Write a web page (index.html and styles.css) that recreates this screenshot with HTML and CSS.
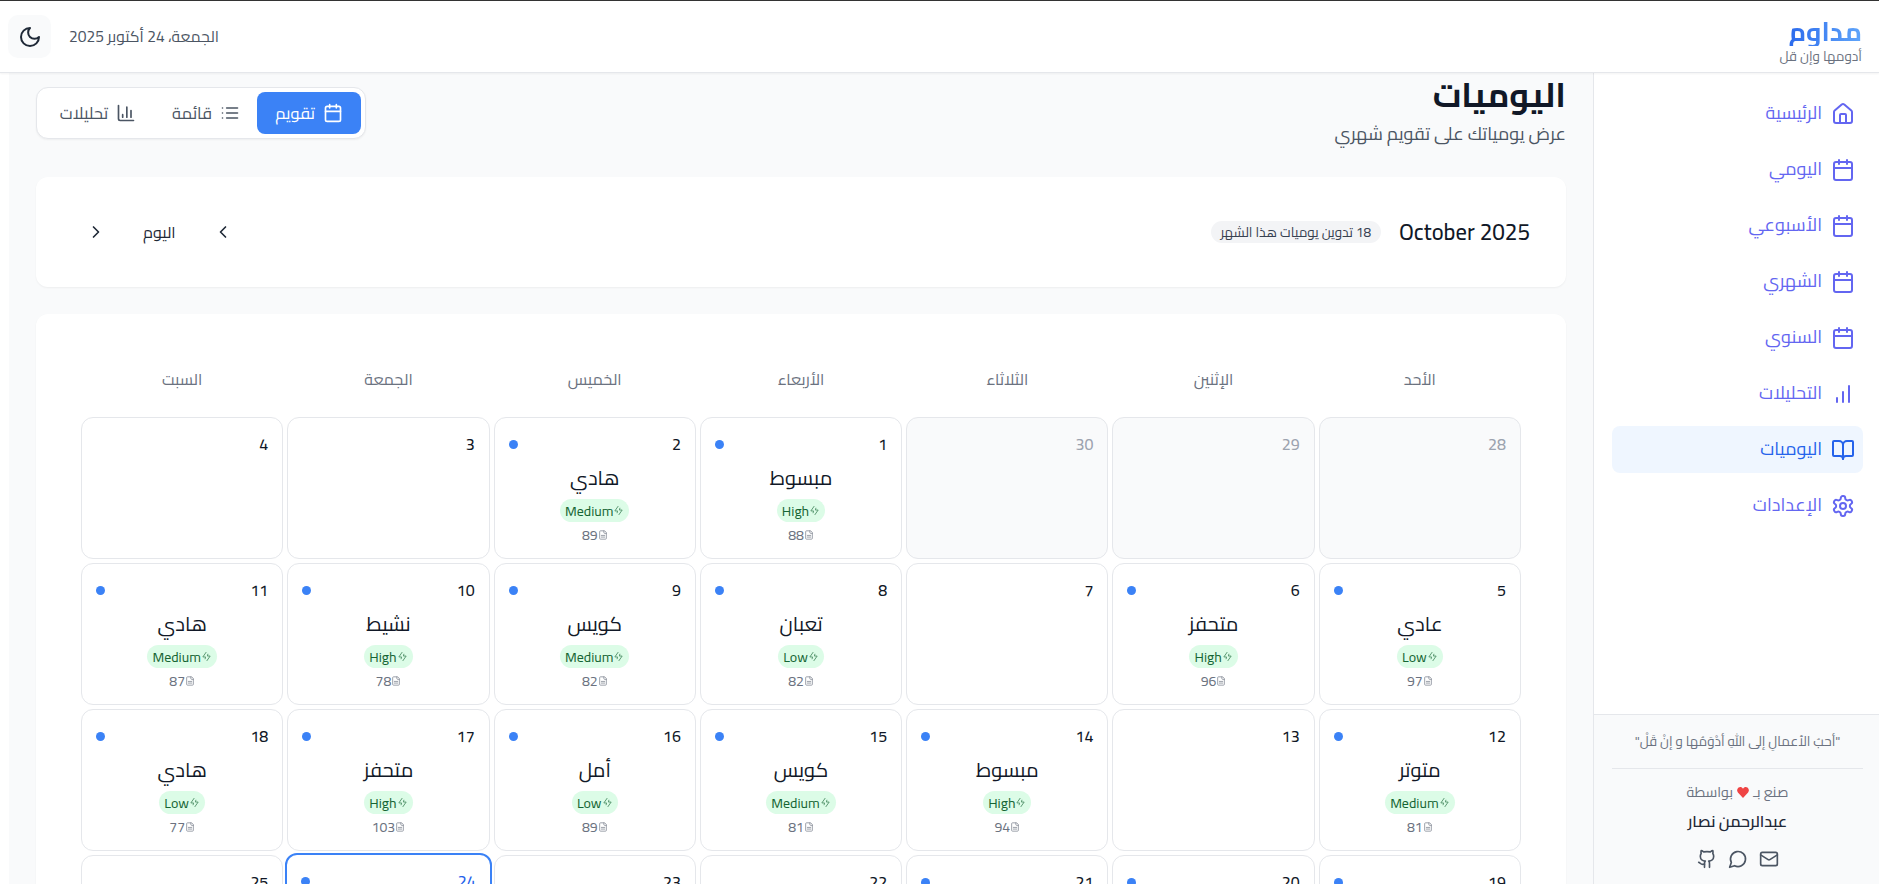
FILE: index.html
```html
<!DOCTYPE html>
<html lang="ar" dir="rtl">
<head>
<meta charset="utf-8">
<title>مداوم</title>
<link rel="stylesheet" href="styles.css">
</head>
<body>
<svg class="sprite" width="0" height="0" aria-hidden="true">
  <symbol id="i-cal" viewBox="0 0 24 24"><path d="M8 2v4M16 2v4"/><rect x="3" y="4" width="18" height="18" rx="2"/><path d="M3 10h18"/></symbol>
  <symbol id="i-home" viewBox="0 0 24 24"><path d="M15 21v-8a1 1 0 0 0-1-1h-4a1 1 0 0 0-1 1v8"/><path d="M3 10a2 2 0 0 1 .709-1.528l7-5.999a2 2 0 0 1 2.582 0l7 5.999A2 2 0 0 1 21 10v9a2 2 0 0 1-2 2H5a2 2 0 0 1-2-2z"/></symbol>
  <symbol id="i-bars" viewBox="0 0 24 24"><path d="M12 20V10M18 20V4M6 20v-4"/></symbol>
  <symbol id="i-book" viewBox="0 0 24 24"><path d="M12 7v14"/><path d="M3 18a1 1 0 0 1-1-1V4a1 1 0 0 1 1-1h5a4 4 0 0 1 4 4 4 4 0 0 1 4-4h5a1 1 0 0 1 1 1v13a1 1 0 0 1-1 1h-6a3 3 0 0 0-3 3 3 3 0 0 0-3-3z"/></symbol>
  <symbol id="i-gear" viewBox="0 0 24 24"><path d="M12.22 2h-.44a2 2 0 0 0-2 2v.18a2 2 0 0 1-1 1.73l-.43.25a2 2 0 0 1-2 0l-.15-.08a2 2 0 0 0-2.73.73l-.22.38a2 2 0 0 0 .73 2.73l.15.1a2 2 0 0 1 1 1.72v.51a2 2 0 0 1-1 1.74l-.15.09a2 2 0 0 0-.73 2.73l.22.38a2 2 0 0 0 2.73.73l.15-.08a2 2 0 0 1 2 0l.43.25a2 2 0 0 1 1 1.73V20a2 2 0 0 0 2 2h.44a2 2 0 0 0 2-2v-.18a2 2 0 0 1 1-1.73l.43-.25a2 2 0 0 1 2 0l.15.08a2 2 0 0 0 2.73-.73l.22-.39a2 2 0 0 0-.73-2.73l-.15-.08a2 2 0 0 1-1-1.74v-.5a2 2 0 0 1 1-1.74l.15-.09a2 2 0 0 0 .73-2.73l-.22-.38a2 2 0 0 0-2.73-.73l-.15.08a2 2 0 0 1-2 0l-.43-.25a2 2 0 0 1-1-1.73V4a2 2 0 0 0-2-2z"/><circle cx="12" cy="12" r="3"/></symbol>
  <symbol id="i-moon" viewBox="0 0 24 24"><path d="M12 3a6 6 0 0 0 9 9 9 9 0 1 1-9-9Z"/></symbol>
  <symbol id="i-list" viewBox="0 0 24 24"><path d="M3 12h.01M3 18h.01M3 6h.01M8 12h13M8 18h13M8 6h13"/></symbol>
  <symbol id="i-chart" viewBox="0 0 24 24"><path d="M3 3v16a2 2 0 0 0 2 2h16"/><path d="M18 17V9M13 17V5M8 17v-3"/></symbol>
  <symbol id="i-left" viewBox="0 0 24 24"><path d="m15 18-6-6 6-6"/></symbol>
  <symbol id="i-right" viewBox="0 0 24 24"><path d="m9 18 6-6-6-6"/></symbol>
  <symbol id="i-zap" viewBox="0 0 24 24"><path d="M11 3 4 13h6l-1 4"/><path d="M13 21l7-10h-6l1-4"/></symbol>
  <symbol id="i-file" viewBox="0 0 24 24"><path d="M15 2H6a2 2 0 0 0-2 2v16a2 2 0 0 0 2 2h12a2 2 0 0 0 2-2V7Z"/><path d="M14 2v4a2 2 0 0 0 2 2h4M8 13h8M8 17h8"/></symbol>
  <symbol id="i-mail" viewBox="0 0 24 24"><rect x="2" y="4" width="20" height="16" rx="2"/><path d="m22 7-8.97 5.7a1.94 1.94 0 0 1-2.06 0L2 7"/></symbol>
  <symbol id="i-chat" viewBox="0 0 24 24"><path d="M7.9 20A9 9 0 1 0 4 16.1L2 22Z"/></symbol>
  <symbol id="i-git" viewBox="0 0 24 24"><path d="M15 22v-4a4.8 4.8 0 0 0-1-3.5c3 0 6-2 6-5.5.08-1.25-.27-2.48-1-3.5.28-1.15.28-2.35 0-3.5 0 0-1 0-3 1.5-2.64-.5-5.36-.5-8 0C6 2 5 2 5 2c-.3 1.15-.3 2.35 0 3.5A5.403 5.403 0 0 0 4 9c0 3.5 3 5.5 6 5.5-.39.49-.68 1.05-.85 1.65-.17.6-.22 1.23-.15 1.85v4"/><path d="M9 18c-4.51 2-5-2-7-2"/></symbol>
  <symbol id="i-heart" viewBox="0 0 24 24"><path d="M12 22 2.6 12.2A6.2 6.2 0 0 1 7 2c2 0 3.700 1 5 3 1.300-2 3-3 5-3a6.200 6.200 0 0 1 4.400 10.200Z"/></symbol>
</svg>

<header class="topbar">
  <div class="brand">
    <div class="brand-name">مداوم</div>
    <div class="brand-tag">أدومها وإن قل</div>
  </div>
  <div class="top-tools">
    <span class="today-date">الجمعة، 24 أكتوبر 2025</span>
    <button class="theme-btn"><svg class="ico i24"><use href="#i-moon"/></svg></button>
  </div>
</header>

<div class="shell">
  <aside class="sidebar">
    <nav class="nav">
      <a class="nav-item"><svg class="ico i24"><use href="#i-home"/></svg><span>الرئيسية</span></a>
      <a class="nav-item"><svg class="ico i24"><use href="#i-cal"/></svg><span>اليومي</span></a>
      <a class="nav-item"><svg class="ico i24"><use href="#i-cal"/></svg><span>الأسبوعي</span></a>
      <a class="nav-item"><svg class="ico i24"><use href="#i-cal"/></svg><span>الشهري</span></a>
      <a class="nav-item"><svg class="ico i24"><use href="#i-cal"/></svg><span>السنوي</span></a>
      <a class="nav-item"><svg class="ico i24"><use href="#i-bars"/></svg><span>التحليلات</span></a>
      <a class="nav-item active"><svg class="ico i24"><use href="#i-book"/></svg><span>اليوميات</span></a>
      <a class="nav-item"><svg class="ico i24"><use href="#i-gear"/></svg><span>الإعدادات</span></a>
    </nav>
    <div class="side-foot">
      <p class="quote">"أحبُ الأعمالِ إلى اللهِ أدْوَمُها و إنْ قَلْ"</p>
      <div class="foot-rule"></div>
      <p class="made">صنع بـ <svg class="heart"><use href="#i-heart"/></svg> بواسطة</p>
      <p class="author">عبدالرحمن نصار</p>
      <div class="socials">
        <svg class="ico i20"><use href="#i-mail"/></svg>
        <svg class="ico i20"><use href="#i-chat"/></svg>
        <svg class="ico i20"><use href="#i-git"/></svg>
      </div>
    </div>
  </aside>

  <main class="main">
    <section class="page-head">
      <div class="titles">
        <h1>اليوميات</h1>
        <p>عرض يومياتك على تقويم شهري</p>
      </div>
      <div class="views">
        <button class="view view-cal on"><svg class="ico i20"><use href="#i-cal"/></svg>تقويم</button>
        <button class="view view-list"><svg class="ico i20"><use href="#i-list"/></svg>قائمة</button>
        <button class="view view-stats"><svg class="ico i20"><use href="#i-chart"/></svg>تحليلات</button>
      </div>
    </section>

    <section class="card month-bar">
      <div class="month-info">
        <h2>October 2025</h2>
        <span class="month-count">18 تدوين يوميات هذا الشهر</span>
      </div>
      <div class="month-nav">
        <svg class="ico i20"><use href="#i-left"/></svg>
        <span>اليوم</span>
        <svg class="ico i20"><use href="#i-right"/></svg>
      </div>
    </section>

    <section class="card cal">
      <div class="week">
        <span>الأحد</span><span>الإثنين</span><span>الثلاثاء</span><span>الأربعاء</span><span>الخميس</span><span>الجمعة</span><span>السبت</span>
      </div>
      <div class="grid" id="grid">
        <div class="cell muted"><div class="cell-top"><b>28</b></div></div>
        <div class="cell muted"><div class="cell-top"><b>29</b></div></div>
        <div class="cell muted"><div class="cell-top"><b>30</b></div></div>
        <div class="cell"><div class="cell-top"><b>1</b><i></i></div><div class="mood">مبسوط</div><span class="pill">High<svg class="ico"><use href="#i-zap"/></svg></span><div class="count">88<svg class="ico"><use href="#i-file"/></svg></div></div>
        <div class="cell"><div class="cell-top"><b>2</b><i></i></div><div class="mood">هادي</div><span class="pill">Medium<svg class="ico"><use href="#i-zap"/></svg></span><div class="count">89<svg class="ico"><use href="#i-file"/></svg></div></div>
        <div class="cell"><div class="cell-top"><b>3</b></div></div>
        <div class="cell"><div class="cell-top"><b>4</b></div></div>

        <div class="cell"><div class="cell-top"><b>5</b><i></i></div><div class="mood">عادي</div><span class="pill">Low<svg class="ico"><use href="#i-zap"/></svg></span><div class="count">97<svg class="ico"><use href="#i-file"/></svg></div></div>
        <div class="cell"><div class="cell-top"><b>6</b><i></i></div><div class="mood">متحفز</div><span class="pill">High<svg class="ico"><use href="#i-zap"/></svg></span><div class="count">96<svg class="ico"><use href="#i-file"/></svg></div></div>
        <div class="cell"><div class="cell-top"><b>7</b></div></div>
        <div class="cell"><div class="cell-top"><b>8</b><i></i></div><div class="mood">تعبان</div><span class="pill">Low<svg class="ico"><use href="#i-zap"/></svg></span><div class="count">82<svg class="ico"><use href="#i-file"/></svg></div></div>
        <div class="cell"><div class="cell-top"><b>9</b><i></i></div><div class="mood">كويس</div><span class="pill">Medium<svg class="ico"><use href="#i-zap"/></svg></span><div class="count">82<svg class="ico"><use href="#i-file"/></svg></div></div>
        <div class="cell"><div class="cell-top"><b>10</b><i></i></div><div class="mood">نشيط</div><span class="pill">High<svg class="ico"><use href="#i-zap"/></svg></span><div class="count">78<svg class="ico"><use href="#i-file"/></svg></div></div>
        <div class="cell"><div class="cell-top"><b>11</b><i></i></div><div class="mood">هادي</div><span class="pill">Medium<svg class="ico"><use href="#i-zap"/></svg></span><div class="count">87<svg class="ico"><use href="#i-file"/></svg></div></div>

        <div class="cell"><div class="cell-top"><b>12</b><i></i></div><div class="mood">متوتر</div><span class="pill">Medium<svg class="ico"><use href="#i-zap"/></svg></span><div class="count">81<svg class="ico"><use href="#i-file"/></svg></div></div>
        <div class="cell"><div class="cell-top"><b>13</b></div></div>
        <div class="cell"><div class="cell-top"><b>14</b><i></i></div><div class="mood">مبسوط</div><span class="pill">High<svg class="ico"><use href="#i-zap"/></svg></span><div class="count">94<svg class="ico"><use href="#i-file"/></svg></div></div>
        <div class="cell"><div class="cell-top"><b>15</b><i></i></div><div class="mood">كويس</div><span class="pill">Medium<svg class="ico"><use href="#i-zap"/></svg></span><div class="count">81<svg class="ico"><use href="#i-file"/></svg></div></div>
        <div class="cell"><div class="cell-top"><b>16</b><i></i></div><div class="mood">أمل</div><span class="pill">Low<svg class="ico"><use href="#i-zap"/></svg></span><div class="count">89<svg class="ico"><use href="#i-file"/></svg></div></div>
        <div class="cell"><div class="cell-top"><b>17</b><i></i></div><div class="mood">متحفز</div><span class="pill">High<svg class="ico"><use href="#i-zap"/></svg></span><div class="count">103<svg class="ico"><use href="#i-file"/></svg></div></div>
        <div class="cell"><div class="cell-top"><b>18</b><i></i></div><div class="mood">هادي</div><span class="pill">Low<svg class="ico"><use href="#i-zap"/></svg></span><div class="count">77<svg class="ico"><use href="#i-file"/></svg></div></div>

        <div class="cell"><div class="cell-top"><b>19</b><i></i></div></div>
        <div class="cell"><div class="cell-top"><b>20</b><i></i></div></div>
        <div class="cell"><div class="cell-top"><b>21</b><i></i></div></div>
        <div class="cell"><div class="cell-top"><b>22</b></div></div>
        <div class="cell"><div class="cell-top"><b>23</b></div></div>
        <div class="cell today"><div class="cell-top"><b>24</b><i></i></div></div>
        <div class="cell"><div class="cell-top"><b>25</b></div></div>
      </div>
    </section>
  </main>
  <div class="gutter"></div>
</div>
</body>
</html>
```
FILE: styles.css
```css
* { box-sizing: border-box; }
html, body { height: 100%; }
body {
  margin: 0;
  overflow: hidden;
  background: #fff;
  color: #111827;
  font-family: Cairo, "Noto Sans Arabic", "Noto Kufi Arabic", "Open Sans", "DejaVu Sans", sans-serif;
  font-size: 16px;
  display: flex;
  flex-direction: column;
  border-top: 1px solid #333;
}
.sprite { position: absolute; }
.ico { width: 20px; height: 20px; fill: none; stroke: currentColor; stroke-width: 2; stroke-linecap: round; stroke-linejoin: round; flex: none; }
.i24 { width: 24px; height: 24px; }
.i20 { width: 20px; height: 20px; }

.topbar {
  height: 72px; flex: none;
  display: flex; align-items: center; justify-content: space-between;
  padding: 0 17px 0 8px;
  border-bottom: 1px solid #e5e7eb;
  box-shadow: 0 1px 2px rgba(0,0,0,.05);
  background: #fff;
  position: relative;
}
.brand { text-align: right; padding-top: 8px; }
.brand-name { font-size: 26.5px; font-weight: 700; line-height: 30px; color: #3b82f6; background: linear-gradient(to left, #60a5fa, #2563eb); -webkit-background-clip: text; background-clip: text; -webkit-text-fill-color: transparent; }
.brand-tag { font-size: 13.5px; line-height: 19px; margin-top: 1px; color: #6b7280; }
.top-tools { display: flex; align-items: center; gap: 18px; }
.today-date { font-size: 15.6px; color: #4b5563; }
.theme-btn { width: 43px; height: 43px; border: 0; border-radius: 10px; background: #f9fafb; color: #1f2937; display: flex; align-items: center; justify-content: center; padding: 0; }

.shell { flex: 1; display: flex; min-height: 0; }
.sidebar { width: 286px; flex: none; border-left: 1px solid #e5e7eb; display: flex; flex-direction: column; background: #fff; }
.nav { flex: 1; padding: 17px 16px 0 18px; display: flex; flex-direction: column; gap: 9px; }
.nav-item { height: 47px; display: flex; align-items: center; gap: 9px; padding: 0 8px; border-radius: 8px; color: #6366f1; font-size: 18px; }
.nav-item span { margin-top: -2px; }
.nav-item.active { background: #eff6ff; color: #2563eb; }

.side-foot { height: 170px; flex: none; border-top: 1px solid #e5e7eb; background: #f9fafb; padding: 16px 16px 0 18px; text-align: center; }
.side-foot p { margin: 0; }
.quote { font-size: 13.4px; line-height: 22px; color: #6b7280; }
.foot-rule { height: 1px; background: #e5e7eb; margin: 15px 0 12px; }
.made { font-size: 14.2px; line-height: 22px; color: #6b7280; }
.heart { width: 14px; height: 13px; fill: #ef4444; vertical-align: -2px; }
.author { font-size: 16px; font-weight: 600; line-height: 22px; margin-top: 7px !important; color: #1f2937; }
.socials { display: flex; justify-content: center; gap: 11px; margin-top: 17px; color: #4b5563; }

.main { flex: 1; min-width: 0; overflow: hidden; background: #f9fafb; padding: 0 27px 0 27px; }
.gutter { width: 9px; flex: none; background: #fff; }

.page-head { display: flex; justify-content: space-between; align-items: flex-start; height: 104px; padding-top: 2px; }
.titles h1 { margin: 0; font-size: 34px; line-height: 40px; font-weight: 700; color: #111827; }
.titles p { margin: 6px 0 0; font-size: 18px; line-height: 26px; color: #4b5563; }
.views { display: flex; gap: 4px; padding: 4px; margin-top: 12px; background: #fff; border: 1px solid #e5e7eb; border-radius: 12px; box-shadow: 0 1px 2px rgba(0,0,0,.05); }
.view { height: 42px; display: flex; align-items: center; justify-content: center; gap: 8px; border: 0; border-radius: 8px; background: none; font: inherit; font-size: 16.5px; color: #4b5563; padding: 0; }
.view-cal { width: 104px; }
.view-list { width: 94px; }
.view-stats { width: 114px; }
.view.on { background: #3b82f6; color: #fff; }

.card { background: #fff; border-radius: 12px; box-shadow: 0 1px 2px rgba(0,0,0,.05); }
.month-bar { height: 110px; display: flex; align-items: center; justify-content: space-between; padding: 0 36px; margin-bottom: 27px; }
.month-info { display: flex; align-items: center; gap: 18px; }
.month-info h2 { margin: 0; font-size: 22.5px; font-weight: 500; direction: ltr; }
.month-count { font-size: 13.5px; line-height: 22px; padding: 0 10px; border-radius: 11px; background: #f3f4f6; color: #374151; }
.month-nav { display: flex; align-items: center; gap: 37px; font-size: 16px; color: #1f2937; margin-left: 14px; }

.cal { padding: 45px 45px 0; min-height: 700px; }
.week { display: grid; grid-template-columns: repeat(7, 1fr); gap: 4px; height: 58px; text-align: center; font-size: 16px; line-height: 40px; color: #6b7280; }
.grid { display: grid; grid-template-columns: repeat(7, 1fr); grid-auto-rows: 142px; gap: 4px; }
.cell { border: 1px solid #e5e7eb; border-radius: 12px; padding: 14px; display: flex; flex-direction: column; align-items: center; background: #fff; }
.cell.muted { background: #f9fafb; }
.cell.muted b { color: #9ca3af; }
.cell.today { border: 2px solid #3b82f6; margin: -2px; }
.cell.today b { color: #2563eb; }
.cell-top { width: 100%; height: 24px; display: flex; align-items: center; justify-content: space-between; }
.cell-top b { font-weight: 500; font-size: 16px; }
.cell-top i { width: 9px; height: 9px; border-radius: 50%; background: #3b82f6; }
.mood { font-size: 20px; line-height: 28px; margin-top: 8px; color: #111827; }
.pill { display: inline-flex; align-items: center; direction: ltr; height: 23px; margin-top: 7px; padding: 0 5px; border-radius: 12px; background: #dcfce7; color: #166534; font-size: 14px; }
.pill .ico { width: 11px; height: 11px; stroke-width: 2; opacity: .7; }
.count { display: flex; align-items: center; direction: ltr; margin-top: 4px; font-size: 14px; line-height: 18px; color: #6b7280; }
.count .ico { width: 10px; height: 10px; opacity: .8; }
```
